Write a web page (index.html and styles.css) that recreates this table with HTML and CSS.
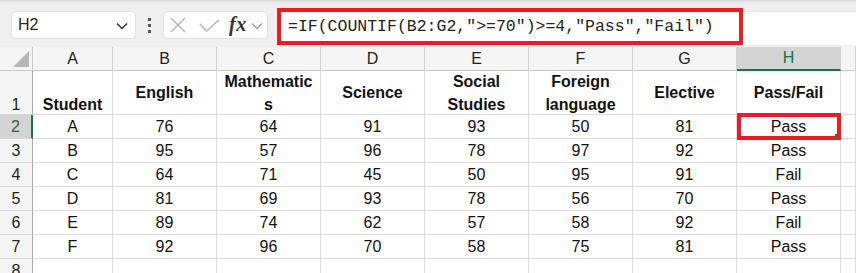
FILE: index.html
```html
<!DOCTYPE html>
<html>
<head>
<meta charset="utf-8">
<link rel="stylesheet" href="styles.css">
</head>
<body>
<div class="app">
  <div class="toolbar">
    <div class="namebox">
      <span class="nb-text">H2</span>
      <svg class="nb-chev" width="12" height="8" viewBox="0 0 12 8"><polyline points="1,1.5 6,6.5 11,1.5" fill="none" stroke="#333" stroke-width="1.5"/></svg>
    </div>
    <div class="dots"><i></i><i></i><i></i></div>
    <div class="fxbox">
      <svg class="ic-x" width="16" height="16" viewBox="0 0 16 16"><path d="M1 1 L15 15 M15 1 L1 15" stroke="#b3b3b3" stroke-width="1.4" fill="none"/></svg>
      <svg class="ic-check" width="21" height="13" viewBox="0 0 21 13"><polyline points="1,5 7.5,12 20,1" fill="none" stroke="#b3b3b3" stroke-width="1.4"/></svg>
      <span class="fx">fx</span>
      <svg class="fx-chev" width="12" height="8" viewBox="0 0 12 8"><polyline points="1,1.5 6,6.5 11,1.5" fill="none" stroke="#9a9a9a" stroke-width="1.3"/></svg>
    </div>
    <div class="formula">
      <div class="formula-hl">=IF(COUNTIF(B2:G2,"&gt;=70")&gt;=4,"Pass","Fail")</div>
    </div>
  </div>

  <div class="grid">
    <div class="corner"><svg width="16" height="16" viewBox="0 0 16 16"><polygon points="16,0 16,16 0,16" fill="#b7b7b7"/></svg></div>
    <div class="ch">A</div><div class="ch">B</div><div class="ch">C</div><div class="ch">D</div><div class="ch">E</div><div class="ch">F</div><div class="ch">G</div><div class="ch ch-sel">H</div><div class="ch"></div>

    <div class="rh rh-bottom">1</div>
    <div class="c hd hd-bottom">Student</div>
    <div class="c hd">English</div>
    <div class="c hd">Mathematic<br>s</div>
    <div class="c hd">Science</div>
    <div class="c hd">Social<br>Studies</div>
    <div class="c hd">Foreign<br>language</div>
    <div class="c hd">Elective</div>
    <div class="c hd">Pass/Fail</div>
    <div class="c"></div>

    <div class="rh rh-sel">2</div>
    <div class="c">A</div><div class="c">76</div><div class="c">64</div><div class="c">91</div><div class="c">93</div><div class="c">50</div><div class="c">81</div>
    <div class="c sel">Pass<span class="handle"></span></div><div class="c"></div>

    <div class="rh">3</div>
    <div class="c">B</div><div class="c">95</div><div class="c">57</div><div class="c">96</div><div class="c">78</div><div class="c">97</div><div class="c">92</div><div class="c">Pass</div><div class="c"></div>

    <div class="rh">4</div>
    <div class="c">C</div><div class="c">64</div><div class="c">71</div><div class="c">45</div><div class="c">50</div><div class="c">95</div><div class="c">91</div><div class="c">Fail</div><div class="c"></div>

    <div class="rh">5</div>
    <div class="c">D</div><div class="c">81</div><div class="c">69</div><div class="c">93</div><div class="c">78</div><div class="c">56</div><div class="c">70</div><div class="c">Pass</div><div class="c"></div>

    <div class="rh">6</div>
    <div class="c">E</div><div class="c">89</div><div class="c">74</div><div class="c">62</div><div class="c">57</div><div class="c">58</div><div class="c">92</div><div class="c">Fail</div><div class="c"></div>

    <div class="rh">7</div>
    <div class="c">F</div><div class="c">92</div><div class="c">96</div><div class="c">70</div><div class="c">58</div><div class="c">75</div><div class="c">81</div><div class="c">Pass</div><div class="c"></div>

    <div class="rh rh-clip">8</div>
    <div class="c"></div><div class="c"></div><div class="c"></div><div class="c"></div><div class="c"></div><div class="c"></div><div class="c"></div><div class="c"></div><div class="c"></div>
  </div>
</div>
</body>
</html>
```

FILE: styles.css
```css
* { box-sizing: border-box; }
html, body { margin: 0; padding: 0; }
body {
  width: 856px;
  height: 273px;
  overflow: hidden;
  background: #ffffff;
  font-family: "Liberation Sans", Arial, sans-serif;
  color: #111;
}
.app { width: 856px; height: 273px; overflow: hidden; }

/* ---------- toolbar ---------- */
.toolbar {
  height: 47px;
  background: linear-gradient(to bottom, #d6d6d6 0px, #e8e8e8 2px, #efefef 4px, #efefef 100%);
  display: flex;
  align-items: flex-start;
  padding: 11px 0 0 11px;
}
.namebox {
  width: 125px;
  height: 28px;
  background: #fff;
  border: 1px solid #e2e2e2;
  border-radius: 5px;
  display: flex;
  align-items: center;
  padding: 0 7px 0 6px;
  justify-content: space-between;
}
.nb-text { font-size: 16px; color: #222; }
.nb-chev { margin-top: 1px; }
.dots {
  width: 27px;
  height: 28px;
  display: flex;
  flex-direction: column;
  align-items: center;
  justify-content: center;
  gap: 3px;
}
.dots i { display: block; width: 3px; height: 3px; background: #555; }
.fxbox {
  width: 105px;
  height: 28px;
  background: #fff;
  border: 1px solid #e2e2e2;
  border-radius: 5px;
  display: flex;
  align-items: center;
  padding-left: 6px;
}
.ic-x { margin-right: 13px; }
.ic-check { margin-right: 9px; margin-top: 1px; }
.fx {
  font-family: "Liberation Serif", "Times New Roman", serif;
  font-style: italic;
  font-weight: bold;
  font-size: 20px;
  color: #333;
  letter-spacing: 0.5px;
  margin-right: 4px;
  margin-top: -2px;
}
.fx-chev { margin-top: 2px; }
.formula {
  margin-left: 9px;
  flex: 1;
  height: 34px;
  background: #fff;
  border-top: 1px solid #e4e4e4;
}
.formula-hl {
  margin-top: -4px;
  width: 466px;
  height: 37px;
  border: 4px solid #ec1c24;
  padding-left: 7px;
  font-family: "Liberation Mono", "Courier New", monospace;
  font-size: 16.5px;
  color: #222;
  display: flex;
  align-items: center;
  white-space: pre;
}

/* ---------- grid ---------- */
.grid {
  display: grid;
  grid-template-columns: 33px 80px repeat(7, 104px) 15px;
  grid-template-rows: 24px 44px repeat(7, 24px);
}
.grid > div {
  display: flex;
  align-items: center;
  justify-content: center;
  font-size: 16px;
  white-space: nowrap;
}
.corner {
  background: #f5f5f5;
  border-right: 1px solid #c8c8c8;
  border-bottom: 1px solid #c8c8c8;
  align-items: flex-end !important;
  justify-content: flex-end !important;
  padding: 0 3px 3px 0;
}
.ch {
  background: #f5f5f5;
  border-right: 1px solid #d2d2d2;
  border-bottom: 1px solid #c8c8c8;
  color: #222;
}
.ch-sel {
  background: #d4d4d4;
  color: #1d6b43;
  border-bottom: 2px solid #1f7244;
}
.rh {
  background: #f5f5f5;
  border-right: 1px solid #a9a9a9;
  border-bottom: 1px solid #d6d6d6;
  color: #222;
}
.rh-bottom { align-items: flex-end !important; line-height: 18px; }
.rh-clip { align-items: flex-start !important; padding-top: 3px; }
.rh-sel {
  background: #d4d4d4;
  color: #1d6b43;
  border-right: 2px solid #1f7244;
}
.c {
  border-right: 1px solid #dedede;
  border-bottom: 1px solid #dedede;
  color: #111;
}
.hd {
  font-weight: bold;
  line-height: 23px;
  text-align: center;
  white-space: normal !important;
}
.hd-bottom { align-items: flex-end !important; line-height: 18px; }
.sel { position: relative; }
.sel::after {
  content: "";
  position: absolute;
  left: 0;
  right: -1px;
  top: -2px;
  bottom: -2px;
  border: 4px solid #ec1c24;
}
.handle {
  position: absolute;
  right: 3px;
  bottom: 1px;
  width: 2px;
  height: 3px;
  background: #1f7244;
  z-index: 2;
}
```
